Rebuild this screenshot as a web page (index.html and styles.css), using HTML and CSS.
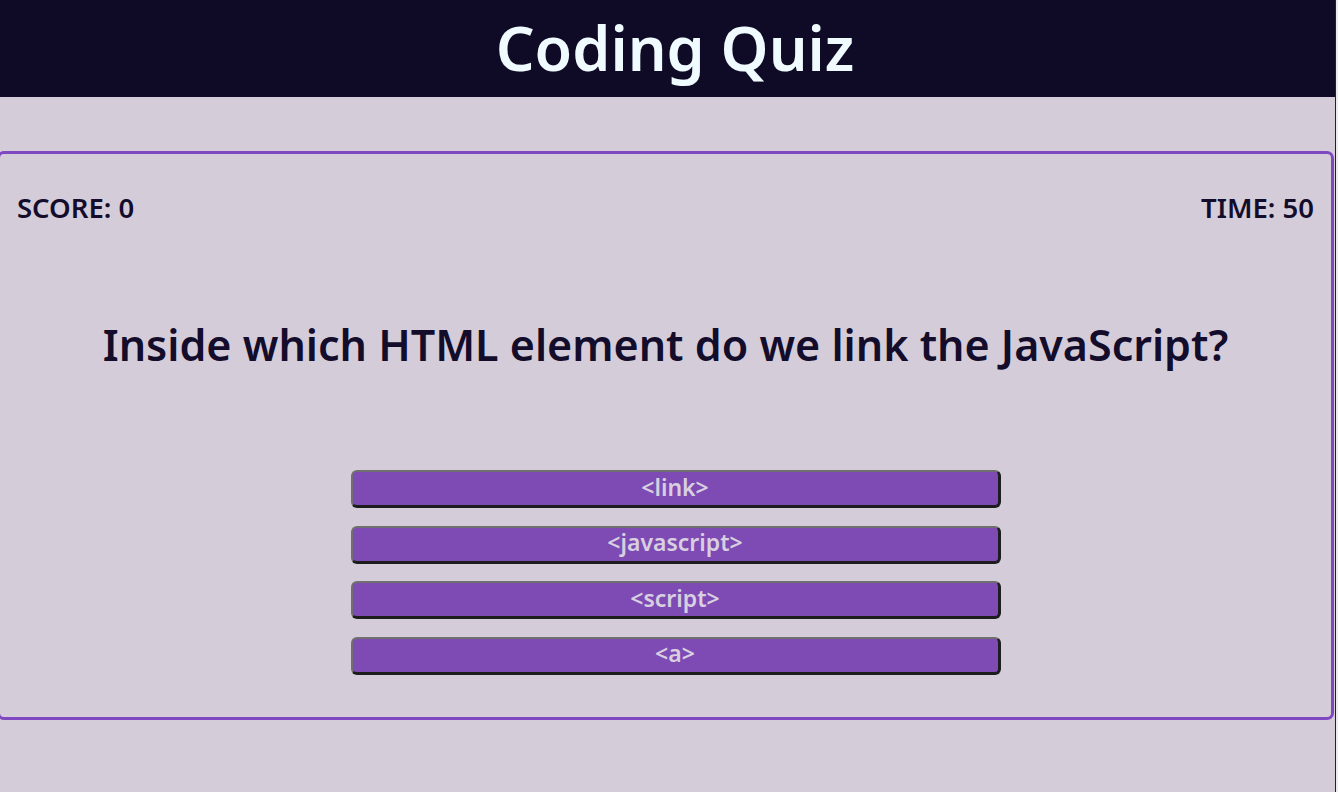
FILE: index.html
```html
<!DOCTYPE html>
<html lang="en">
<head>
<meta charset="utf-8">
<title>Coding Quiz</title>
<link rel="stylesheet" href="styles.css">
</head>
<body>
  <div class="page">
    <header class="site-header">
      <h1 class="site-title">Coding Quiz</h1>
    </header>
    <main class="main">
      <section class="quiz-card">
        <div class="stats">
          <span class="stat">SCORE: 0</span>
          <span class="stat">TIME: 50</span>
        </div>
        <h2 class="question">Inside which HTML element do we link the JavaScript?</h2>
        <div class="answers">
          <button class="answer">&lt;link&gt;</button>
          <button class="answer">&lt;javascript&gt;</button>
          <button class="answer">&lt;script&gt;</button>
          <button class="answer">&lt;a&gt;</button>
        </div>
      </section>
    </main>
  </div>
</body>
</html>
```
FILE: styles.css
```css
html {
  background: #ececec;
  height: 100%;
}
body {
  margin: 0;
  height: 100%;
  font-family: "Noto Sans", "Open Sans", sans-serif;
  overflow: hidden;
}
.page {
  width: 1335px;
  height: 100%;
  background: #d5ccda;
  border-right: 1px solid #222222;
  overflow: hidden;
}
.site-header {
  height: 97px;
  background: #0f0a26;
  display: flex;
  align-items: center;
  justify-content: center;
  padding-left: 15px;
  box-sizing: border-box;
}
.site-title {
  margin: 0;
  color: #effbff;
  font-size: 61px;
  font-weight: 600;
  line-height: 1;
  padding-bottom: 2px;
}
.main {
  padding-top: 54px;
}
.quiz-card {
  margin-left: -3px;
  width: 1337px;
  box-sizing: border-box;
  border: 3px solid #8048c0;
  border-radius: 7px;
  padding: 35px 17px 42px 17px;
  display: flex;
  flex-direction: column;
  align-items: center;
  color: #130d2b;
}
.stats {
  width: 100%;
  display: flex;
  justify-content: space-between;
}
.stat {
  font-size: 27.5px;
  font-weight: 600;
  line-height: 38px;
}
.question {
  margin: 88px 0 0;
  font-size: 43px;
  font-weight: 600;
  line-height: 60px;
  text-align: center;
}
.answers {
  margin-top: 95px;
  margin-left: 20px;
  display: flex;
  flex-direction: column;
  gap: 17.5px;
}
.answer {
  width: 650px;
  height: 38px;
  box-sizing: border-box;
  background: #7d4bb3;
  color: #d8cfe0;
  font-family: "Noto Sans", "Open Sans", sans-serif;
  font-size: 23px;
  font-weight: 600;
  line-height: 1;
  padding: 0 0 3px;
  border-width: 2px 3px 3px 2px;
  border-style: solid;
  border-color: #6f6f6f #1d1d1d #1d1d1d #6f6f6f;
  border-radius: 6px;
}
```
